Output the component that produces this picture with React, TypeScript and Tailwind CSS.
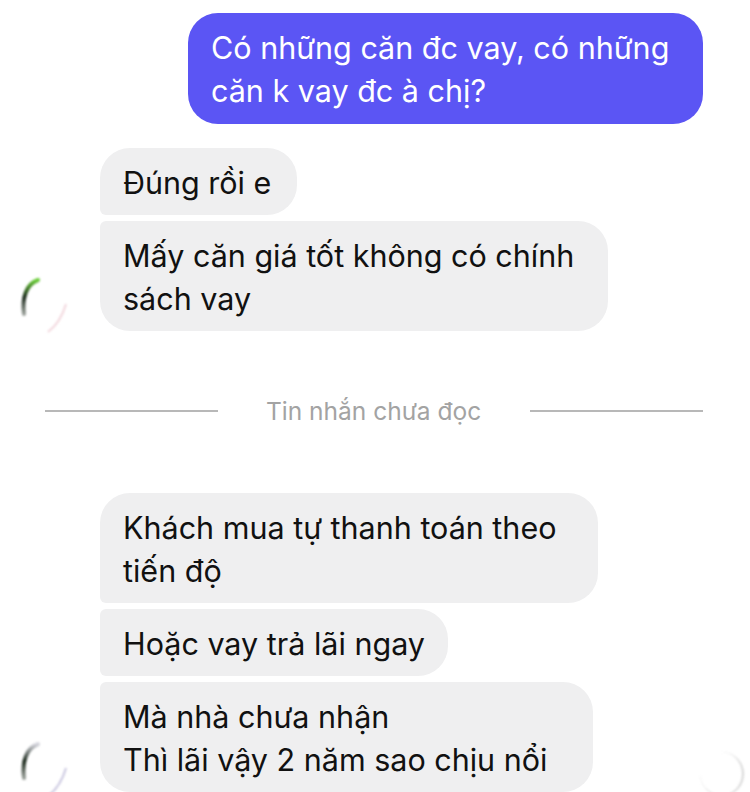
import React from 'react';

const font = { fontFamily: 'Inter, "Noto Sans", sans-serif' };

function GrayBubble({
  lines,
  width,
  shape,
}: {
  lines: string[];
  width: string;
  shape: string;
}) {
  return (
    <div
      className={`${width} ${shape} bg-[#efeff0] pl-[23px] pr-4 pt-[13px] pb-[11px] text-[30.5px] leading-[43px] text-[#111111]`}
    >
      {lines.map((l) => (
        <div key={l} className="whitespace-nowrap">
          {l}
        </div>
      ))}
    </div>
  );
}

function BlurAvatar({ tint }: { tint: 'green' | 'pink' }) {
  return (
    <svg width="70" height="60" viewBox="0 0 70 60" className="blur-[1px]">
      <defs>
        <linearGradient id={`g-${tint}`} x1="0" y1="0" x2="0" y2="1">
          <stop offset="0" stopColor={tint === 'green' ? '#6ccf3a' : '#d8d8e0'} />
          <stop offset="0.5" stopColor="#1c2a1c" />
          <stop offset="1" stopColor="#9aa09a" />
        </linearGradient>
      </defs>
      <path
        d="M38 6 C26 10 22 24 24 40"
        stroke={`url(#g-${tint})`}
        strokeWidth="4"
        fill="none"
        strokeLinecap="round"
      />
      <path
        d="M66 30 C62 44 56 52 48 58"
        stroke={tint === 'green' ? '#f2d6dc' : '#c9c6df'}
        strokeWidth="2"
        fill="none"
      />
    </svg>
  );
}

export default function App() {
  return (
    <div
      className="relative w-[750px] h-[792px] overflow-hidden bg-white"
      style={font}
    >
      <div className="flex flex-col pt-[13px]">
        {/* Outgoing */}
        <div className="ml-[188px] w-[515px] rounded-[30px] bg-[#5b55f4] pl-[23px] pr-4 pt-[13px] pb-[12px] text-[30.5px] leading-[43px] text-white">
          <div className="whitespace-nowrap">Có những căn đc vay, có những</div>
          <div className="whitespace-nowrap">căn k vay đc à chị?</div>
        </div>

        {/* Incoming group 1 */}
        <div className="ml-[100px] mt-[24px] flex flex-col gap-[6px]">
          <GrayBubble
            lines={['Đúng rồi e']}
            width="w-[197px]"
            shape="rounded-[30px] rounded-bl-[6px]"
          />
          <GrayBubble
            lines={['Mấy căn giá tốt không có chính', 'sách vay']}
            width="w-[508px]"
            shape="rounded-[30px] rounded-tl-[6px]"
          />
        </div>

        {/* Divider */}
        <div className="mt-[68px] flex items-center h-[24px]">
          <div className="ml-[45px] w-[173px] h-[2px] bg-[#b8b8b8]" />
          <div className="ml-[48px] w-[217px] text-[24.5px] leading-[24px] text-[#a3a3a3] whitespace-nowrap">
            Tin nhắn chưa đọc
          </div>
          <div className="ml-[47px] w-[173px] h-[2px] bg-[#b8b8b8]" />
        </div>

        {/* Incoming group 2 */}
        <div className="ml-[100px] mt-[70px] flex flex-col gap-[6px]">
          <GrayBubble
            lines={['Khách mua tự thanh toán theo', 'tiến độ']}
            width="w-[498px]"
            shape="rounded-[30px] rounded-bl-[6px]"
          />
          <GrayBubble
            lines={['Hoặc vay trả lãi ngay']}
            width="w-[348px]"
            shape="rounded-[30px] rounded-l-[6px]"
          />
          <GrayBubble
            lines={['Mà nhà chưa nhận', 'Thì lãi vậy 2 năm sao chịu nổi']}
            width="w-[493px]"
            shape="rounded-[30px] rounded-tl-[6px]"
          />
        </div>
      </div>

      {/* blurred avatars */}
      <div className="absolute left-0 top-[274px]">
        <BlurAvatar tint="green" />
      </div>
      <div className="absolute left-0 top-[738px]">
        <BlurAvatar tint="pink" />
      </div>
      <div className="absolute left-[700px] top-[752px] w-[44px] h-[44px] rounded-full border-r-2 border-b border-[#d6d6d6] blur-[1px]" />
    </div>
  );
}
